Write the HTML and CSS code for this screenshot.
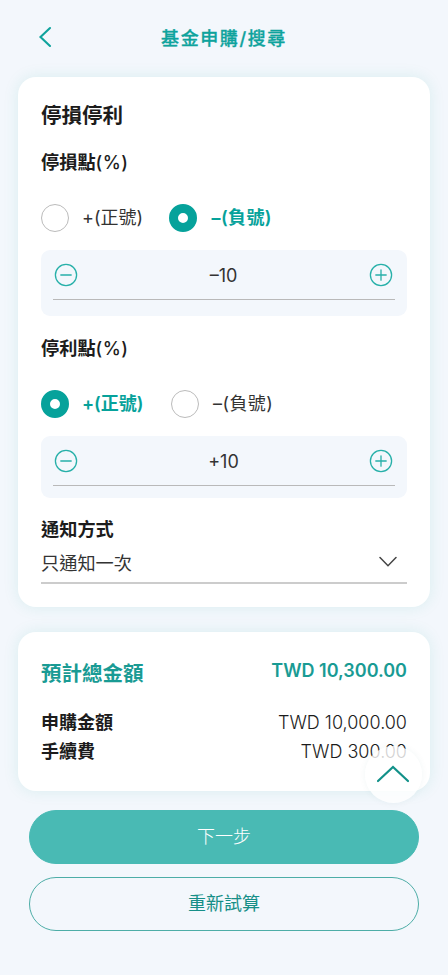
FILE: index.html
```html
<!DOCTYPE html>
<html lang="zh-Hant">
<head>
<meta charset="utf-8">
<meta name="viewport" content="width=device-width, initial-scale=1">
<title>基金申購/搜尋</title>
<link rel="stylesheet" href="styles.css">
</head>
<body>
<header class="topbar">
  <svg class="back" viewBox="0 0 14 22"><path d="M12 2 2.5 11 12 20"/></svg>
  <h1 class="page-title">基金申購/搜尋</h1>
</header>
<main>
  <section class="card settings">
    <h2 class="title">停損停利</h2>
    <h3 class="label">停損點<span class="unit">(%)</span></h3>
    <div class="radios">
      <div class="radio"><span class="dot"></span><span class="sign">+(正號)</span></div>
      <div class="radio checked"><span class="dot"></span><span class="sign minus">–(負號)</span></div>
    </div>
    <div class="stepper">
      <div class="stepper-row">
        <svg class="step" viewBox="0 0 24 24"><circle cx="12" cy="12" r="10.6"/><path d="M6.8 12h10.4"/></svg>
        <span class="value">–10</span>
        <svg class="step" viewBox="0 0 24 24"><circle cx="12" cy="12" r="10.6"/><path d="M6.8 12h10.4M12 6.8v10.4"/></svg>
      </div>
    </div>
    <h3 class="label">停利點<span class="unit">(%)</span></h3>
    <div class="radios">
      <div class="radio checked"><span class="dot"></span><span class="sign">+(正號)</span></div>
      <div class="radio"><span class="dot"></span><span class="sign minus">–(負號)</span></div>
    </div>
    <div class="stepper short">
      <div class="stepper-row">
        <svg class="step" viewBox="0 0 24 24"><circle cx="12" cy="12" r="10.6"/><path d="M6.8 12h10.4"/></svg>
        <span class="value">+10</span>
        <svg class="step" viewBox="0 0 24 24"><circle cx="12" cy="12" r="10.6"/><path d="M6.8 12h10.4M12 6.8v10.4"/></svg>
      </div>
    </div>
    <h3 class="label notify">通知方式</h3>
    <div class="select">
      <span>只通知一次</span>
      <svg class="chevron" viewBox="0 0 18 12"><path d="M1 1.5 9 9.7 17 1.5"/></svg>
    </div>
  </section>
  <section class="card summary">
    <div class="row total"><span>預計總金額</span><span class="amount">TWD 10,300.00</span></div>
    <div class="row"><span>申購金額</span><span class="amount">TWD 10,000.00</span></div>
    <div class="row"><span>手續費</span><span class="amount">TWD 300.00</span></div>
    <div class="to-top"><svg viewBox="0 0 34 18"><path d="M2 16 17 2 32 16"/></svg></div>
  </section>
  <div class="actions">
    <button class="btn primary">下一步</button>
    <button class="btn outline">重新試算</button>
  </div>
</main>
</body>
</html>
```
FILE: styles.css
```css
* { box-sizing: border-box; }
body {
  margin: 0;
  height: 975px;
  overflow: hidden;
  background: #f3f7fc;
  color: #1c1c1c;
  font-family: Inter, "Noto Sans CJK TC", sans-serif;
  font-size: 18px;
}
h1, h2, h3 { margin: 0; }
svg { display: block; fill: none; stroke-linecap: round; flex: none; }
.topbar {
  height: 77px;
  padding: 3px 0 3px;
  display: flex;
  align-items: center;
  justify-content: center;
  position: relative;
}
.back {
  position: absolute;
  left: 38px;
  top: 26px;
  width: 14px;
  height: 22px;
  stroke: #0fa39d;
  stroke-width: 2.1;
}
.page-title {
  font-size: 18px;
  font-weight: 500;
  letter-spacing: 1.6px;
  line-height: 28px;
  color: #0fa39d;
  -webkit-text-stroke: .3px #0fa39d;
}
.card {
  margin: 0 18.5px 0 18px;
  padding: 24px 22.5px 0 23px;
  background: #fff;
  border-radius: 18px;
  box-shadow: 0 0 16px rgba(0, 160, 140, .11);
}
.settings { height: 530px; }
.title { font-size: 20.5px; line-height: 30px; font-weight: 600; }
.label { margin-top: 16px; font-size: 18.2px; line-height: 32px; font-weight: 600; }
.unit { font-weight: 500; letter-spacing: .4px; }
.radios { display: flex; gap: 27px; margin: 26px 0 18px; }
.title + .label { margin-top: 15px; }
.title + .label + .radios { gap: 26px; }
.radio { display: flex; align-items: center; gap: 13px; height: 28px; color: #333; }
.dot { width: 28px; height: 28px; border: 1.5px solid #bbb; border-radius: 50%; }
.checked { color: #06a29b; font-weight: 600; }
.checked .dot { border: 9px solid #06a29b; }
.sign { line-height: 28px; }
.minus { margin-left: 1.5px; letter-spacing: .4px; }
.stepper { height: 66px; padding: 0 12px; background: #f3f7fc; border-radius: 9px; }
.short { height: 62px; }
.stepper-row {
  height: 50px;
  padding: 0 2px 0 1px;
  border-bottom: 1.5px solid #b9b9b9;
  display: flex;
  align-items: center;
  justify-content: space-between;
}
.step { width: 24px; height: 24px; stroke: #27b0a9; stroke-width: 1.3; }
.value { color: #333; padding-top: 2px; }
.label.notify { margin-top: 17px; line-height: 28px; }
.select {
  height: 41px;
  padding: 0 10px 2px 0;
  border-bottom: 2px solid #ccc;
  display: flex;
  align-items: center;
  justify-content: space-between;
  color: #333;
  font-size: 18.2px;
}
.chevron { width: 18px; height: 12px; stroke: #444; stroke-width: 1.5; }
.summary { position: relative; height: 159px; margin-top: 25px; padding-top: 23px; }
.row { display: flex; justify-content: space-between; line-height: 29px; font-weight: 600; }
.amount { font-weight: 300; }
.total { height: 53px; line-height: 37px; font-size: 20.5px; color: #199b94; }
.total .amount { font-size: 18px; font-weight: 600; line-height: 31px; }
.to-top {
  position: absolute;
  right: 8px;
  bottom: -12px;
  width: 57px;
  height: 57px;
  padding-bottom: 2px;
  border-radius: 50%;
  background: rgba(255, 255, 255, .8);
  box-shadow: 0 0 7px rgba(0, 100, 100, .06);
  display: flex;
  align-items: center;
  justify-content: center;
}
.to-top svg { width: 34px; height: 18px; stroke: #129189; stroke-width: 2.2; }
.actions { margin: 19px 29px 0; display: grid; gap: 13px; }
.btn {
  height: 54px;
  border: 1.5px solid #49bab4;
  border-radius: 27px;
  font: inherit;
  line-height: 28px;
  padding: 0;
}
.primary { background: #49bab4; color: #fff; font-weight: 300; }
.outline { background: transparent; border-color: #4dada7; color: #168f88; }
```
